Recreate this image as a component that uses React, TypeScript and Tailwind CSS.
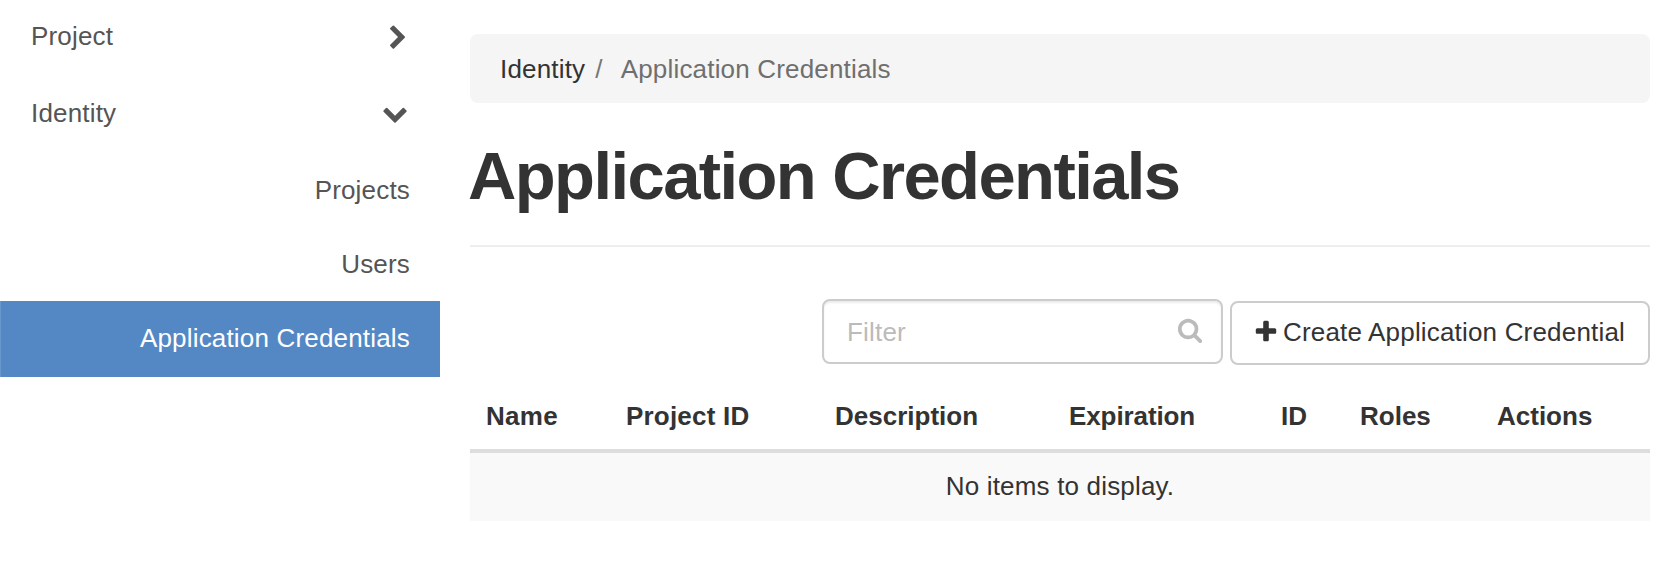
import React from "react";

const icons = {
  chevronRight:
    "M1363 877l-742 742q-19 19-45 19t-45-19l-166-166q-19-19-19-45t19-45l531-531-531-531q-19-19-19-45t19-45l166-166q19-19 45-19t45 19l742 742q19 19 19 45t-19 45z",
  chevronDown:
    "M1683 808l-742 741q-19 19-45 19t-45-19l-742-741q-19-19-19-45.5t19-45.5l166-165q19-19 45-19t45 19l531 531 531-531q19-19 45-19t45 19l166 165q19 19 19 45.5t-19 45.5z",
  plus:
    "M1600 736v192q0 40-28 68t-68 28h-416v416q0 40-28 68t-68 28h-192q-40 0-68-28t-28-68v-416h-416q-40 0-68-28t-28-68v-192q0-40 28-68t68-28h416v-416q0-40 28-68t68-28h192q40 0 68 28t28 68v416h416q40 0 68 28t28 68z",
  search:
    "M1216 832q0-185-131.5-316.5t-316.5-131.5-316.5 131.5-131.5 316.5 131.5 316.5 316.5 131.5 316.5-131.5 131.5-316.5zm512 832q0 52-38 90t-90 38q-54 0-90-38l-343-342q-179 124-399 124-143 0-273.5-55.5t-225-150-150-225-55.5-273.5 55.5-273.5 150-225 225-150 273.5-55.5 273.5 55.5 225 150 150 225 55.5 273.5q0 220-124 399l343 343q37 37 37 90z",
};

function Icon({ name, className = "" }: { name: keyof typeof icons; className?: string }) {
  return (
    <svg viewBox="0 0 1792 1792" fill="currentColor" aria-hidden="true" className={`size-[26px] shrink-0 ${className}`}>
      <path d={icons[name]} />
    </svg>
  );
}

function Sidebar() {
  return (
    <nav className="w-[440px] shrink-0 text-[#555]">
      <a className="flex h-[72px] items-center justify-between pr-[29px] pl-[31px]">
        Project
        <Icon name="chevronRight" className="mt-[4px]" />
      </a>
      <a className="flex h-[82px] items-center justify-between pr-[32px] pl-[31px]">
        Identity
        <Icon name="chevronDown" className="-mt-[1px]" />
      </a>
      <a className="flex h-[72px] items-center justify-end pr-[30px]">Projects</a>
      <a className="flex h-[75px] items-center justify-end pr-[30px] pt-[1px]">Users</a>
      <a className="flex h-[76px] items-center justify-end border-l border-[#6b98cc] bg-[#5488c5] pr-[30px] pb-[2px] text-white">
        Application Credentials
      </a>
    </nav>
  );
}

function Breadcrumb() {
  return (
    <div className="flex h-[69px] items-center rounded-lg bg-[#f5f5f5] pt-[2px] pl-[30px]">
      <span className="text-[#333]">Identity</span>
      <span className="ml-[10px] text-[#777]">/</span>
      <span className="ml-[18px] text-[#6f6f6f]">Application Credentials</span>
    </div>
  );
}

function Toolbar() {
  return (
    <div className="mt-[52px] flex h-[66px] justify-end gap-[7px]">
      <div className="flex h-[65px] w-[401px] items-center justify-between rounded-lg border-2 border-[#ccc] pr-[18px] pl-[23px] text-[#bbb] shadow-[inset_0_2px_2px_rgba(0,0,0,0.075)]">
        <input
          placeholder="Filter"
          aria-label="Filter"
          className="mt-[2px] w-[280px] bg-transparent outline-none placeholder:text-[#bbb]"
        />
        <Icon name="search" className="-mt-[3px]" />
      </div>
      <button className="mt-[2px] flex h-[64px] w-[420px] items-center rounded-lg border-2 border-[#ccc] pb-[2px] pl-[21px] whitespace-nowrap">
        <Icon name="plus" />
        <span className="ml-[4px]">Create Application Credential</span>
      </button>
    </div>
  );
}

function CredentialsTable() {
  return (
    <div>
      <div className="mt-[14px] grid h-[74px] grid-cols-[140px_209px_234px_212px_79px_137px_1fr] items-center border-b-4 border-[#ddd] pt-[4px] pl-4 font-bold tracking-normal whitespace-nowrap">
        <span className="tracking-[0.3px]">Name</span>
        <span className="tracking-[0.2px]">Project ID</span>
        <span>Description</span>
        <span className="tracking-[-0.1px]">Expiration</span>
        <span>ID</span>
        <span>Roles</span>
        <span>Actions</span>
      </div>
      <div className="flex h-[68px] items-center justify-center bg-[#f9f9f9] pb-[2px]">No items to display.</div>
    </div>
  );
}

export default function App() {
  return (
    <div className="flex h-[586px] w-[1676px] overflow-hidden bg-white font-['Liberation_Sans',sans-serif] text-[26px] leading-[37px] tracking-[0.18px] text-[#333]">
      <Sidebar />
      <main className="ml-[30px] w-[1180px] pt-[34px]">
        <Breadcrumb />
        <div className="mt-[37px] h-[107px] border-b-2 border-[#eee]">
          <h1 className="-ml-[2px] text-[67px] leading-[72px] font-bold tracking-[-1.6px] whitespace-nowrap">
            Application Credentials
          </h1>
        </div>
        <Toolbar />
        <CredentialsTable />
      </main>
    </div>
  );
}
